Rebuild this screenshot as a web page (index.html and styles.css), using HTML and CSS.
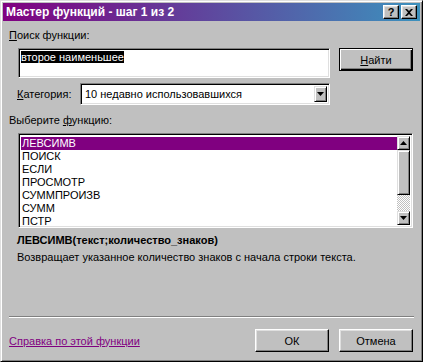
FILE: index.html
```html
<!DOCTYPE html>
<html lang="ru">
<head>
    <meta charset="UTF-8">
    <title>Мастер функций - шаг 1 из 2</title>
    <link rel="stylesheet" href="styles.css">
</head>
<body>
    <div class="window">
        <div class="titlebar">
            <span class="title">Мастер функций - шаг 1 из 2</span>
            <span class="tb-btn help">?</span>
            <span class="tb-btn close">
                <svg width="8" height="7" viewBox="0 0 8 7"><path d="M0 0h2l2 2 2-2h2L5 3.5 8 7H6L4 5 2 7H0l3-3.5z" fill="#000"/></svg>
            </span>
        </div>

        <div class="content">
            <div class="label"><u>П</u>оиск функции:</div>

            <div class="search-row">
                <div class="field search-box"><span class="selected">второе наименьшее</span></div>
                <button class="btn default"><u>Н</u>айти</button>
            </div>

            <div class="category-row">
                <span class="cat-label"><u>К</u>атегория:</span>
                <div class="field combo">
                    <span class="combo-text">10 недавно использовавшихся</span>
                    <span class="drop-btn">
                        <svg width="7" height="4" viewBox="0 0 7 4"><path d="M0 0h7L3.5 4z" fill="#000"/></svg>
                    </span>
                </div>
            </div>

            <div class="label list-label">Выберите <u>ф</u>ункцию:</div>

            <div class="field listbox">
                <div class="items">
                    <div class="item active">ЛЕВСИМВ</div>
                    <div class="item">ПОИСК</div>
                    <div class="item">ЕСЛИ</div>
                    <div class="item">ПРОСМОТР</div>
                    <div class="item">СУММПРОИЗВ</div>
                    <div class="item">СУММ</div>
                    <div class="item">ПСТР</div>
                </div>
                <div class="scrollbar">
                    <span class="sb-btn">
                        <svg width="7" height="4" viewBox="0 0 7 4"><path d="M0 4h7L3.5 0z" fill="#000"/></svg>
                    </span>
                    <span class="sb-thumb"></span>
                    <span class="sb-track"></span>
                    <span class="sb-btn">
                        <svg width="7" height="4" viewBox="0 0 7 4"><path d="M0 0h7L3.5 4z" fill="#000"/></svg>
                    </span>
                </div>
            </div>

            <div class="syntax">ЛЕВСИМВ(текст;количество_знаков)</div>
            <div class="desc">Возвращает указанное количество знаков с начала строки текста.</div>

            <div class="separator"></div>

            <div class="bottom-row">
                <a class="help-link" href="#">Справка по этой функции</a>
                <button class="btn">ОК</button>
                <button class="btn">Отмена</button>
            </div>
        </div>
    </div>
</body>
</html>
```

FILE: styles.css
```css
body { margin: 0; background: #c0c0c0; font-family: "Liberation Sans", Arial, sans-serif; font-size: 11px; color: #000; }
u { text-decoration: underline; }

.window { width: 423px; height: 362px; box-sizing: border-box; padding: 2px; background: #c0c0c0;
    border: 1px solid; border-color: #dfdfdf #000 #000 #dfdfdf;
    box-shadow: inset 1px 1px #fff, inset -1px -1px #808080;
    display: flex; flex-direction: column; }

.titlebar { height: 18px; flex: none; display: flex; align-items: center; gap: 2px; padding: 0 3px 0 3px;
    background: linear-gradient(to right, #800080, #3c91bd); color: #fff; }
.title { font-weight: bold; font-size: 12px; margin-right: auto; }
.tb-btn { width: 16px; height: 14px; box-sizing: border-box; background: #c0c0c0; color: #000;
    border: 1px solid; border-color: #fff #000 #000 #fff;
    box-shadow: inset -1px -1px #808080, inset 1px 1px #dfdfdf;
    display: flex; align-items: center; justify-content: center; font-weight: bold; font-size: 11px; line-height: 1; }

.content { flex: 1; display: flex; flex-direction: column; padding: 0 6px 7px 6px; }
.label { line-height: 13px; margin-top: 8px; }

.field { box-sizing: border-box; background: #fff;
    border: 1px solid; border-color: #808080 #fff #fff #808080;
    box-shadow: inset 1px 1px #000, inset -1px -1px #dfdfdf; }

.search-row { display: flex; align-items: flex-start; margin: 6px 0 0 9px; }
.search-box { width: 312px; height: 30px; padding: 2px 0 0 2px; line-height: 13px; }
.selected { background: #000; color: #fff; }

.btn { width: 74px; height: 23px; box-sizing: border-box; background: #c0c0c0; font: inherit; color: #000; padding: 0;
    border: 1px solid; border-color: #fff #000 #000 #fff;
    box-shadow: inset -1px -1px #808080, inset 1px 1px #dfdfdf; }
.btn.default { margin-left: 9px; border-color: #000;
    box-shadow: inset 1px 1px #fff, inset -1px -1px #000, inset -2px -2px #808080; }

.category-row { display: flex; align-items: center; margin: 5px 0 0 8px; }
.cat-label { width: 63px; }
.combo { width: 250px; height: 22px; display: flex; align-items: center; padding: 2px; }
.combo-text { flex: 1; padding-left: 2px; }
.drop-btn { width: 13px; height: 16px; box-sizing: border-box; background: #c0c0c0;
    border: 1px solid; border-color: #dfdfdf #000 #000 #dfdfdf;
    box-shadow: inset 1px 1px #fff, inset -1px -1px #808080;
    display: flex; align-items: center; justify-content: center; }

.list-label { margin-top: 9px; }
.listbox { width: 395px; height: 95px; margin: 6px 0 0 9px; padding: 2px; display: flex; }
.items { flex: 1; overflow: hidden; padding-top: 1px; }
.item { height: 13px; line-height: 13px; padding-left: 1px; white-space: nowrap; }
.item.active { background: #800080; color: #fff; }

.scrollbar { width: 13px; display: flex; flex-direction: column; }
.sb-btn, .sb-thumb { box-sizing: border-box; background: #c0c0c0;
    border: 1px solid; border-color: #dfdfdf #000 #000 #dfdfdf;
    box-shadow: inset 1px 1px #fff, inset -1px -1px #808080; }
.sb-btn { height: 14px; display: flex; align-items: center; justify-content: center; }
.sb-thumb { height: 45px; }
.sb-track { flex: 1; background: repeating-conic-gradient(#fff 0 25%, #c0c0c0 0 50%) 0 0 / 2px 2px; }

.syntax { font-weight: bold; margin: 6px 0 0 8px; line-height: 13px; }
.desc { margin: 4px 0 0 8px; line-height: 13px; }

.separator { margin-top: auto; height: 1px; border-top: 1px solid #808080; border-bottom: 1px solid #fff; height: 0; }

.bottom-row { display: flex; align-items: center; gap: 10px; margin-top: 11px; padding-right: 1px; }
.help-link { color: #800080; margin-right: auto; }
```
